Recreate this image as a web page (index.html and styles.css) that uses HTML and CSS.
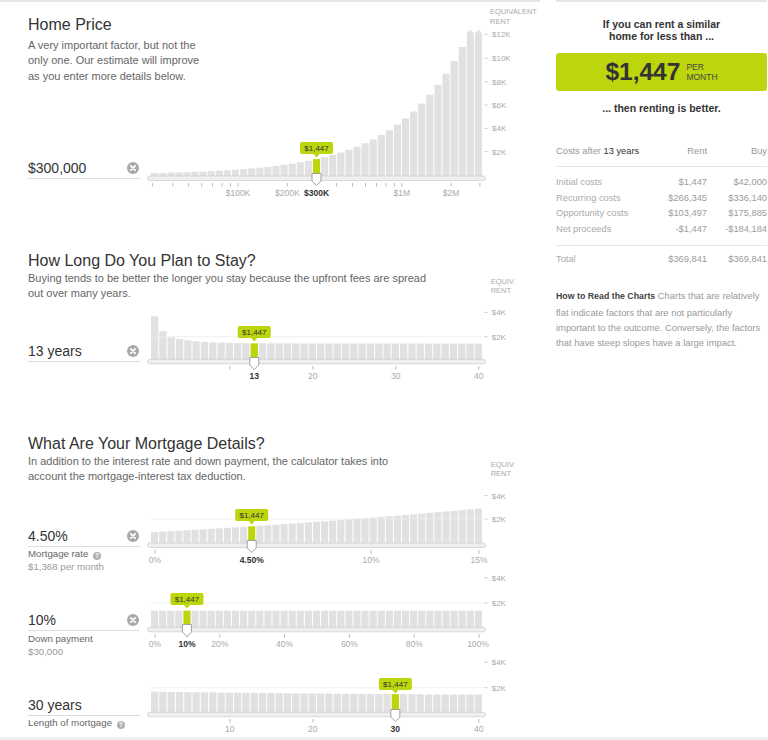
FILE: index.html
```html
<!DOCTYPE html>
<html>
<head>
<meta charset="utf-8">
<title>Rent or Buy</title>
<link rel="stylesheet" href="styles.css">
</head>
<body>
<div class="page">
  <main class="left">
    <section class="sec sec1">
      <div class="ctrl">
        <h2 class="title">Home Price</h2>
        <p class="desc">A very important factor, but not the<br>only one. Our estimate will improve<br>as you enter more details below.</p>
        <div class="field f1"><span class="val">$300,000</span><svg class="clear" width="12" height="12" viewBox="0 0 12 12"><circle cx="6" cy="6" r="6"/><path d="M3.8 3.8L8.2 8.2M8.2 3.8L3.8 8.2"/></svg></div>
      </div>
      <svg class="chart" width="395" height="240" viewBox="145 0 395 240">
        <text class="ax" x="490" y="14.4">EQUIVALENT</text>
        <text class="ax" x="490" y="24">RENT</text>
        <path class="dash" d="M484.5 34.3h3M484.5 58.3h3M484.5 81.7h3M484.5 105h3M484.5 128.3h3M484.5 151.7h3"/>
        <text class="av" x="492" y="37.2">$12K</text>
        <text class="av" x="492" y="61.2">$10K</text>
        <text class="av" x="492" y="84.6">$8K</text>
        <text class="av" x="492" y="107.9">$6K</text>
        <text class="av" x="492" y="131.2">$4K</text>
        <text class="av" x="492" y="154.6">$2K</text>
        <g id="b1"></g>
        <rect class="track" x="147.5" y="176" width="338" height="4.5" rx="2.25"/>
        <path class="tick" d="M152.4 183v3.5M172.8 183v3.5M188.7 183v3.5M201.7 183v3.5M212.6 183v3.5M222.1 183v3.5M230.5 183v3.5M238 183v3.5M287.3 183v3.5M336.6 183v3.5M352.5 183v3.5M365.5 183v3.5M376.5 183v3.5M386 183v3.5M394.4 183v3.5M401.8 183v3.5M451.1 183v3.5M479.9 183v3.5"/>
        <text class="tl" x="238" y="195.7">$100K</text>
        <text class="tl" x="287.3" y="195.7">$200K</text>
        <text class="tl on" x="316.5" y="195.7">$300K</text>
        <text class="tl" x="401.8" y="195.7">$1M</text>
        <text class="tl" x="451.1" y="195.7">$2M</text>
        <path class="tip" d="M302 142h29a2 2 0 0 1 2 2v8a2 2 0 0 1 -2 2h-11.5l-3 3.5l-3 -3.5h-11.5a2 2 0 0 1 -2 -2v-8a2 2 0 0 1 2 -2z"/>
        <text class="tipt" x="316.5" y="150.85">$1,447</text>
        <path class="handle" d="M312 173.5h9v7.5l-4.5 4.5l-4.5 -4.5z"/>
      </svg>
    </section>

    <section class="sec sec2">
      <div class="ctrl">
        <h2 class="title">How Long Do You Plan to Stay?</h2>
        <p class="desc wide">Buying tends to be better the longer you stay because the upfront fees are spread<br>out over many years.</p>
        <div class="field f2"><span class="val">13 years</span><svg class="clear" width="12" height="12" viewBox="0 0 12 12"><circle cx="6" cy="6" r="6"/><path d="M3.8 3.8L8.2 8.2M8.2 3.8L3.8 8.2"/></svg></div>
      </div>
      <svg class="chart" width="395" height="183" viewBox="145 240 395 183">
        <text class="ax" x="490.7" y="284.3">EQUIV.</text>
        <text class="ax" x="490.7" y="292.5">RENT</text>
        <path class="dash" d="M484.5 312.3h3M484.5 336.7h3"/>
        <text class="av" x="491.7" y="315.1">$4K</text>
        <text class="av" x="491.7" y="339.6">$2K</text>
        <g id="b2"></g>
        <path class="grid" d="M151 336.7H483"/>
        <rect class="track" x="147.5" y="359.3" width="338" height="4.5" rx="2.25"/>
        <path class="tick" d="M229.85 366v3.5M312.85 366v3.5M395.85 366v3.5M478.85 366v3.5"/>
        <text class="tl on" x="254.25" y="379">13</text>
        <text class="tl" x="312.85" y="379">20</text>
        <text class="tl" x="395.85" y="379">30</text>
        <text class="tl" x="478.85" y="379">40</text>
        <path class="tip" d="M239.75 326h29a2 2 0 0 1 2 2v8a2 2 0 0 1 -2 2h-11.5l-3 3.5l-3 -3.5h-11.5a2 2 0 0 1 -2 -2v-8a2 2 0 0 1 2 -2z"/>
        <text class="tipt" x="254.25" y="334.85">$1,447</text>
        <path class="handle" d="M249.75 357.5h9v7.5l-4.5 4.5l-4.5 -4.5z"/>
      </svg>
    </section>

    <section class="sec sec3">
      <div class="ctrl">
        <h2 class="title">What Are Your Mortgage Details?</h2>
        <p class="desc wide">In addition to the interest rate and down payment, the calculator takes into<br>account the mortgage-interest tax deduction.</p>
        <div class="field fa"><span class="val">4.50%</span><svg class="clear" width="12" height="12" viewBox="0 0 12 12"><circle cx="6" cy="6" r="6"/><path d="M3.8 3.8L8.2 8.2M8.2 3.8L3.8 8.2"/></svg></div>
        <div class="sub s1"><div class="lbl">Mortgage rate <span class="help">?</span></div><div class="note">$1,368 per month</div></div>
        <div class="field fb"><span class="val">10%</span><svg class="clear" width="12" height="12" viewBox="0 0 12 12"><circle cx="6" cy="6" r="6"/><path d="M3.8 3.8L8.2 8.2M8.2 3.8L3.8 8.2"/></svg></div>
        <div class="sub s2"><div class="lbl">Down payment</div><div class="note">$30,000</div></div>
        <div class="field fc"><span class="val">30 years</span></div>
        <div class="sub s3"><div class="lbl">Length of mortgage <span class="help">?</span></div></div>
      </div>
      <svg class="chart" width="395" height="314" viewBox="145 423 395 314">
        <text class="ax" x="490.7" y="467">EQUIV.</text>
        <text class="ax" x="490.7" y="476">RENT</text>
        <path class="dash" d="M484.5 495.7h3M484.5 519h3M484.5 577.7h3M484.5 603h3M484.5 662.3h3M484.5 687.7h3"/>
        <text class="av" x="491.7" y="498.6">$4K</text>
        <text class="av" x="491.7" y="521.9">$2K</text>
        <text class="av" x="491.7" y="580.6">$4K</text>
        <text class="av" x="491.7" y="605.9">$2K</text>
        <text class="av" x="491.7" y="665.2">$4K</text>
        <text class="av" x="491.7" y="690.6">$2K</text>

        <g id="b3"></g>
        <path class="grid" d="M151 519H483"/>
        <rect class="track" x="147.5" y="543" width="338" height="4.5" rx="2.25"/>
        <path class="tick" d="M155.05 550v3.5M371 550v3.5M478.95 550v3.5"/>
        <text class="tl" x="155" y="563">0%</text>
        <text class="tl on" x="251.7" y="563">4.50%</text>
        <text class="tl" x="371" y="563">10%</text>
        <text class="tl" x="479" y="563">15%</text>
        <path class="tip" d="M237.2 509h29a2 2 0 0 1 2 2v8a2 2 0 0 1 -2 2h-11.5l-3 3.5l-3 -3.5h-11.5a2 2 0 0 1 -2 -2v-8a2 2 0 0 1 2 -2z"/>
        <text class="tipt" x="251.7" y="517.85">$1,447</text>
        <path class="handle" d="M247.2 540.5h9v7.5l-4.5 4.5l-4.5 -4.5z"/>

        <g id="b4"></g>
        <path class="grid" d="M151 603H483"/>
        <rect class="track" x="147.5" y="627.3" width="338" height="4.5" rx="2.25"/>
        <path class="tick" d="M155 634v3.5M187.4 634v3.5M219.8 634v3.5M284.6 634v3.5M349.4 634v3.5M414.2 634v3.5M479 634v3.5"/>
        <text class="tl" x="155" y="647.3">0%</text>
        <text class="tl on" x="187" y="647.3">10%</text>
        <text class="tl" x="219.8" y="647.3">20%</text>
        <text class="tl" x="284.6" y="647.3">40%</text>
        <text class="tl" x="349.4" y="647.3">60%</text>
        <text class="tl" x="414.2" y="647.3">80%</text>
        <text class="tl" x="478" y="647.3">100%</text>
        <path class="tip" d="M172.45 593h29a2 2 0 0 1 2 2v8a2 2 0 0 1 -2 2h-11.5l-3 3.5l-3 -3.5h-11.5a2 2 0 0 1 -2 -2v-8a2 2 0 0 1 2 -2z"/>
        <text class="tipt" x="186.95" y="601.85">$1,447</text>
        <path class="handle" d="M182.45 624.5h9v7.5l-4.5 4.5l-4.5 -4.5z"/>

        <g id="b5"></g>
        <path class="grid" d="M151 687.7H483"/>
        <rect class="track" x="147.5" y="712.3" width="338" height="4.5" rx="2.25"/>
        <path class="tick" d="M229.85 719v3.5M312.85 719v3.5M478.85 719v3.5"/>
        <text class="tl" x="229.85" y="732">10</text>
        <text class="tl" x="312.85" y="732">20</text>
        <text class="tl on" x="395.35" y="732">30</text>
        <text class="tl" x="478.85" y="732">40</text>
        <path class="tip" d="M380.85 678h29a2 2 0 0 1 2 2v8a2 2 0 0 1 -2 2h-11.5l-3 3.5l-3 -3.5h-11.5a2 2 0 0 1 -2 -2v-8a2 2 0 0 1 2 -2z"/>
        <text class="tipt" x="395.35" y="686.85">$1,447</text>
        <path class="handle" d="M390.85 709.5h9v7.5l-4.5 4.5l-4.5 -4.5z"/>
      </svg>
    </section>
  </main>

  <aside class="right">
    <p class="lead">If you can rent a similar<br>home for less than ...</p>
    <div class="bigbox"><span class="amount">$1,447</span><span class="per">PER<br>MONTH</span></div>
    <p class="lead then">... then renting is better.</p>
    <div class="costs">
      <div class="row head"><span>Costs after <b class="yrs">13 years</b></span><span class="num">Rent</span><span class="num">Buy</span></div>
      <div class="body">
        <div class="row"><span>Initial costs</span><span class="num">$1,447</span><span class="num">$42,000</span></div>
        <div class="row"><span>Recurring costs</span><span class="num">$266,345</span><span class="num">$336,140</span></div>
        <div class="row"><span>Opportunity costs</span><span class="num">$103,497</span><span class="num">$175,885</span></div>
        <div class="row"><span>Net proceeds</span><span class="num">-$1,447</span><span class="num">-$184,184</span></div>
      </div>
      <div class="row total"><span>Total</span><span class="num">$369,841</span><span class="num">$369,841</span></div>
    </div>
    <p class="howto"><b>How to Read the Charts</b> Charts that are relatively<br>flat indicate factors that are not particularly<br>important to the outcome. Conversely, the factors<br>that have steep slopes have a large impact.</p>
  </aside>
</div>
<script src="chart.js"></script>
</body>
</html>
```

FILE: styles.css
```css
html {
  background: #f0f0f0;
}
body {
  margin: 0;
  font-family: "Liberation Sans", Arial, sans-serif;
  color: #333;
}
.page {
  display: flex;
  width: 768px;
  height: 737px;
  background: #fff;
  overflow: hidden;
}
.left {
  width: 540px;
  flex-shrink: 0;
  box-shadow: inset 0 2px 0 #e6e6e6;
}
.sec {
  display: flex;
  align-items: flex-start;
}
.sec1 { height: 240px; }
.sec2 { height: 183px; }
.sec3 { height: 314px; }
.ctrl {
  width: 117px;
  flex-shrink: 0;
  padding-left: 28px;
  position: relative;
  z-index: 1;
}
.sec1 .ctrl { padding-top: 15px; }
.sec2 .ctrl, .sec3 .ctrl { padding-top: 10.5px; }
.chart {
  display: block;
  flex-shrink: 0;
}
.title {
  margin: 0;
  font-size: 16px;
  line-height: 20px;
  font-weight: normal;
  color: #333;
  white-space: nowrap;
}
.desc {
  margin: 2.5px 0 0;
  font-size: 11px;
  line-height: 15.5px;
  color: #666;
  white-space: nowrap;
}
.desc.wide {
  margin-top: 0;
  line-height: 15px;
}
.field {
  width: 111px;
  height: 18px;
  padding: 0 1px 1px 0;
  border-bottom: 1px solid #ddd;
  display: flex;
  align-items: center;
  justify-content: space-between;
}
.val {
  font-size: 14px;
  line-height: 18px;
  color: #333;
}
.clear { display: block; }
.clear circle { fill: #a9a9a9; }
.clear path { stroke: #fff; stroke-width: 1.7; stroke-linecap: round; }
.f1 { margin-top: 75px; }
.f2 { margin-top: 41.5px; }
.fa { margin-top: 43.5px; }
.fb { margin-top: 38px; }
.fc { margin-top: 38px; }
.sub {
  font-size: 9.7px;
  line-height: 12.5px;
  white-space: nowrap;
}
.s1 { margin-top: 1px; }
.s2 { margin-top: 2px; }
.s3 { margin-top: 0.5px; }
.lbl { color: #666; }
.note { color: #999; }
.help {
  display: inline-block;
  width: 8px;
  height: 8px;
  margin-left: 2px;
  border-radius: 50%;
  background: #b0b0b0;
  color: #fff;
  font-size: 6.5px;
  line-height: 8px;
  font-weight: bold;
  text-align: center;
  vertical-align: -1px;
}

/* chart parts */
.bar { fill: #e1e1e1; }
.bar.sel { fill: #bcd50c; }
.grid { stroke: #ececec; stroke-width: 0.8; fill: none; }
.track { fill: #efefef; stroke: #cfcfcf; stroke-width: 0.8; }
.tick { stroke: #a8a8a8; stroke-width: 0.8; fill: none; }
.dash { stroke: #bbb; stroke-width: 0.8; fill: none; }
.ax { font-size: 7.5px; fill: #aaa; }
.av { font-size: 8px; fill: #aaa; }
.tl { font-size: 8.5px; fill: #aaa; text-anchor: middle; }
.tl.on { fill: #333; font-weight: bold; }
.tip { fill: #bcd50c; }
.tipt { font-size: 8px; fill: #333; text-anchor: middle; }
.handle { fill: #fff; stroke: #999; stroke-width: 0.9; stroke-linejoin: round; }

/* right panel */
.right {
  width: 211px;
  flex-shrink: 0;
  margin-left: 16px;
  padding-top: 17.5px;
  box-shadow: inset 0 2px 0 #e6e6e6;
}
.lead {
  margin: 0;
  font-size: 10.5px;
  line-height: 12.4px;
  font-weight: bold;
  text-align: center;
  color: #333;
}
.lead.then { margin-top: 11px; }
.bigbox {
  margin-top: 10.5px;
  height: 38px;
  border-radius: 3px;
  background: #bcd50c;
  display: flex;
  align-items: center;
  justify-content: center;
  gap: 6px;
}
.amount {
  font-size: 24.5px;
  line-height: 28px;
  font-weight: bold;
  color: #333;
}
.per {
  font-size: 8.5px;
  line-height: 10px;
  color: #444;
  padding-top: 1px;
}
.costs {
  margin-top: 30px;
  font-size: 9.3px;
  color: #aaa;
}
.row {
  display: grid;
  grid-template-columns: 1fr 60px 60px;
  line-height: 15.67px;
  white-space: nowrap;
}
.num { text-align: right; color: #9c9c9c; }
.row.head {
  line-height: 15px;
  padding-bottom: 6.8px;
  border-bottom: 1px solid #e5e5e5;
  color: #999;
}
.row.head .num { color: #999; }
.yrs { font-weight: normal; color: #333; }
.body {
  padding: 7.9px 0 7.4px;
  border-bottom: 1px solid #e5e5e5;
}
.row.total { padding-top: 6.2px; }
.howto {
  margin: 20.5px 0 0;
  font-size: 9.4px;
  line-height: 15.2px;
  color: #999;
  white-space: nowrap;
}
.howto b {
  font-size: 8.8px;
  color: #444;
}
```

FILE: chart.js
```js
(function () {
  var NS = 'http://www.w3.org/2000/svg';
  function draw(id, n, zero, hf, sel, cap) {
    var g = document.getElementById(id);
    if (!g) return;
    var x0 = 151, w = 332 / n;
    for (var i = 0; i < n; i++) {
      var top = zero - hf(i);
      var clip = cap && top < cap;
      if (clip) top = cap;
      var x = x0 + i * w;
      var r = document.createElementNS(NS, 'rect');
      r.setAttribute('x', x.toFixed(2));
      r.setAttribute('y', top.toFixed(2));
      r.setAttribute('width', (w - 1).toFixed(2));
      r.setAttribute('height', (zero + 2 - top).toFixed(2));
      r.setAttribute('class', i === sel ? 'bar sel' : 'bar');
      g.appendChild(r);
      if (clip) {
        var cx = x + (w - 1) / 2;
        var p = document.createElementNS(NS, 'path');
        p.setAttribute('d', 'M' + (cx - 3.5).toFixed(2) + ' ' + cap + 'L' + cx.toFixed(2) + ' ' + (cap - 3) + 'L' + (cx + 3.5).toFixed(2) + ' ' + cap + 'Z');
        p.setAttribute('class', 'bar');
        g.appendChild(p);
      }
    }
  }
  draw('b1', 41, 176, function (i) { return 1.5 + 15.4 * Math.pow(2, (i - 20) / 5.9); }, 20, 33);
  var stay = [43, 28, 22, 20.3, 19, 18, 17.4, 17, 16.7, 16.4, 16.2, 16.1];
  draw('b2', 40, 359.3, function (i) { return i < stay.length ? stay[i] : 16 - (i - 12) * 0.01; }, 12);
  draw('b3', 41, 543, function (i) { return 11 + 0.428 * i + 0.00393 * i * i; }, 12);
  draw('b4', 41, 627.3, function () { return 16.6; }, 4);
  draw('b5', 40, 712.3, function (i) { return 17.8 + 2.8 * Math.pow(1 - i / 39, 1.5); }, 29);
})();
```
